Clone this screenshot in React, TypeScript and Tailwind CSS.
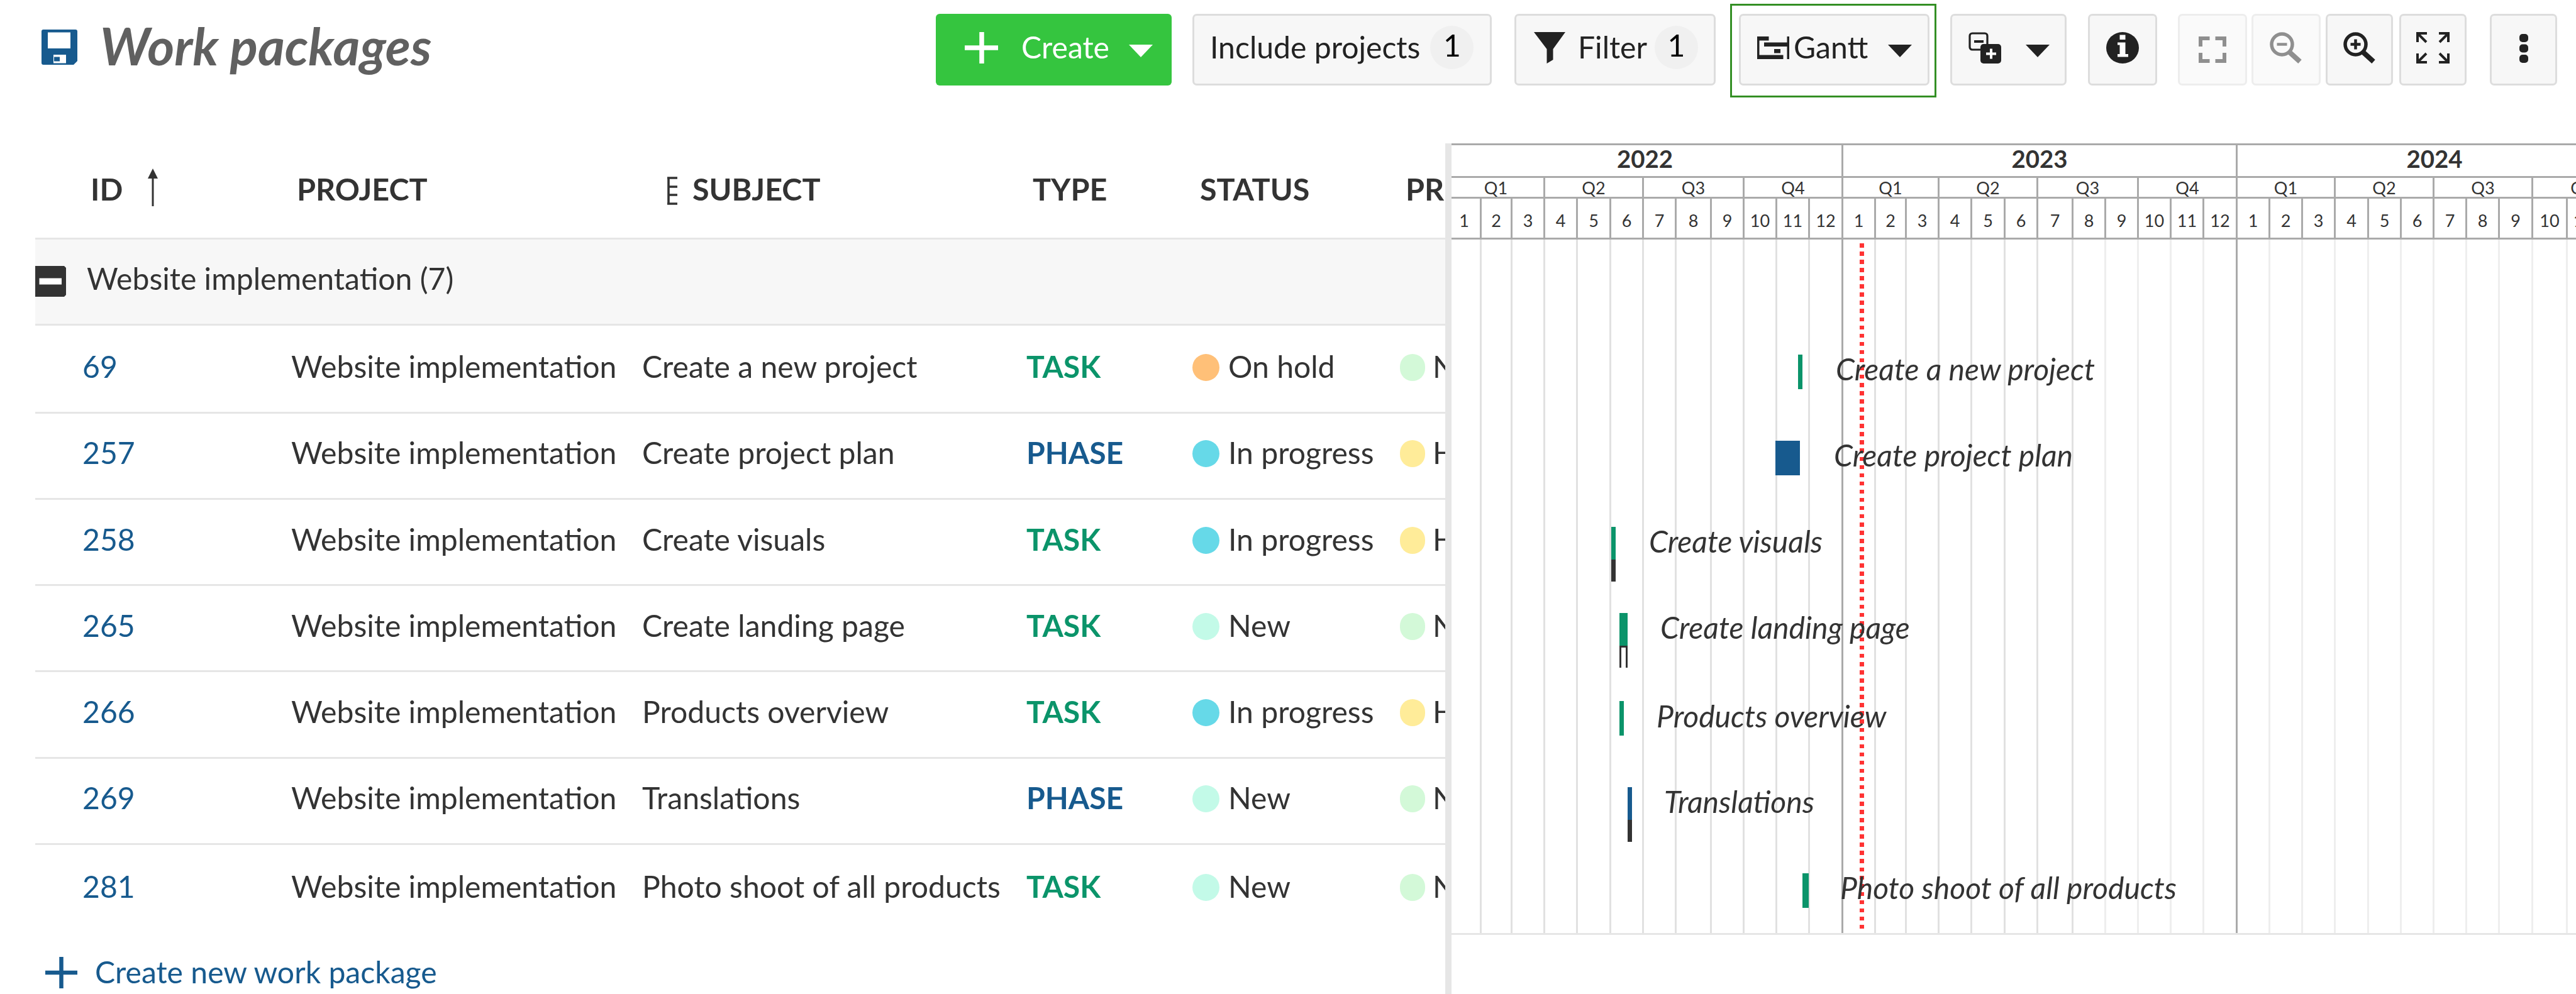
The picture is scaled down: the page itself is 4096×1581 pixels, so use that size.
import type { ReactNode } from "react";

type Row = {
  id: string;
  subject: string;
  type: "TASK" | "PHASE";
  status: "On hold" | "In progress" | "New";
  priority: "Normal" | "High";
  size: string;
};

const rows: Row[] = [
  { id: "69", subject: "Create a new project", type: "TASK", status: "On hold", priority: "Normal", size: "h-[140px] pb-[6px] border-b-[3px]" },
  { id: "257", subject: "Create project plan", type: "PHASE", status: "In progress", priority: "High", size: "h-[137px] pb-[9px] border-b-[3px]" },
  { id: "258", subject: "Create visuals", type: "TASK", status: "In progress", priority: "High", size: "h-[137px] pb-[8px] border-b-[3px]" },
  { id: "265", subject: "Create landing page", type: "TASK", status: "New", priority: "Normal", size: "h-[137px] pb-[7px] border-b-[3px]" },
  { id: "266", subject: "Products overview", type: "TASK", status: "In progress", priority: "High", size: "h-[138px] pb-[8px] border-b-[3px]" },
  { id: "269", subject: "Translations", type: "PHASE", status: "New", priority: "Normal", size: "h-[137px] pb-[9px] border-b-[3px]" },
  { id: "281", subject: "Photo shoot of all products", type: "TASK", status: "New", priority: "Normal", size: "h-[140px] pb-[8px]" },
];

const statusColor = { "On hold": "bg-[#ffc078]", "In progress": "bg-[#66d9e8]", New: "bg-[#c3fae8]" };
const priorityColor = { Normal: "bg-[#d3f9d8]", High: "bg-[#ffec99]" };
const typeColor = { TASK: "text-[#0b946a]", PHASE: "text-[#175a8e]" };

// Left edge of the timeline and the right edge of every month column.
const START = 2308;
const monthEdges = [
  2356, 2405, 2457, 2509, 2562, 2614, 2666, 2722, 2774, 2826, 2878, 2931,
  2983, 3032, 3084, 3136, 3189, 3241, 3297, 3349, 3401, 3453, 3505, 3558,
  3610, 3662, 3714, 3767, 3819, 3871, 3923, 3975, 4028, 4083, 4135, 4187,
];
const spans = (step: number) =>
  monthEdges
    .filter((_, i) => (i + 1) % step === 0)
    .map((edge, i, all) => edge - (i === 0 ? START : all[i - 1]));
const months = spans(1);
const quarters = spans(3);
const years = spans(12);

type Bar = { label: string; labelX: number; labelY: number; x: number; y: number; w: number; color: string; clamp?: "solid" | "open" };

const bars: Bar[] = [
  { label: "Create a new project", labelX: 2919, labelY: 587, x: 2859, y: 564, w: 7, color: "bg-[#0b946a]" },
  { label: "Create project plan", labelX: 2916, labelY: 724, x: 2823, y: 701, w: 39, color: "bg-[#175a8e]" },
  { label: "Create visuals", labelX: 2622, labelY: 861, x: 2562, y: 838, w: 7, color: "bg-[#0b946a]", clamp: "solid" },
  { label: "Create landing page", labelX: 2640, labelY: 998, x: 2575, y: 975, w: 13, color: "bg-[#0b946a]", clamp: "open" },
  { label: "Products overview", labelX: 2634, labelY: 1139, x: 2575, y: 1115, w: 7, color: "bg-[#0b946a]" },
  { label: "Translations", labelX: 2646, labelY: 1275, x: 2588, y: 1252, w: 7, color: "bg-[#175a8e]", clamp: "solid" },
  { label: "Photo shoot of all products", labelX: 2926, labelY: 1412, x: 2866, y: 1389, w: 10, color: "bg-[#0b946a]" },
];

const Icon = ({ w = 52, h = 50, children, className = "" }: { w?: number; h?: number; children: ReactNode; className?: string }) => (
  <svg width={w} height={h} viewBox={`0 0 ${w} ${h}`} className={`block shrink-0 ${className}`} fill="currentColor">
    {children}
  </svg>
);

const Caret = () => (
  <Icon w={38} h={20} className="translate-y-[5px]">
    <path d="M0 0h38L19 20z" />
  </Icon>
);

const Button = ({ children, className = "" }: { children: ReactNode; className?: string }) => (
  <button className={`flex h-[114px] shrink-0 items-center rounded-[7px] border-[3px] border-[#dddddd] bg-[#f7f7f7] pb-[7px] text-[#222222] ${className}`}>
    {children}
  </button>
);

const Badge = () => (
  <span className="flex size-[69px] shrink-0 items-center justify-center rounded-full bg-[#f0f0f0] pb-[7px] text-black">1</span>
);

const Magnifier = ({ plus }: { plus?: boolean }) => (
  <Icon>
    <circle cx="19.5" cy="19.5" r="16.5" fill="none" stroke="currentColor" strokeWidth="5.5" />
    <path d="M31.5 32 48 47" stroke="currentColor" strokeWidth="8" />
    <path d={plus ? "M11.5 19.5h16M19.5 11.5v16" : "M11.5 19.5h16"} stroke="currentColor" strokeWidth="4.5" />
  </Icon>
);

function Toolbar() {
  return (
    <header className="flex h-[228px] shrink-0 items-start pr-[30px]">
      <div className="mt-[47px] ml-[66px] text-[#175a8e]">
        <Icon w={57} h={57}>
          <path fillRule="evenodd" d="M3 0h51a3 3 0 0 1 3 3v47l-6 6H3a3 3 0 0 1-3-3V3a3 3 0 0 1 3-3zM10 4.500v25.500h36V4.500zM19 40v13.500h20V40z" />
          <rect x="20" y="43.500" width="9" height="7" />
        </Icon>
      </div>
      <h1 className="mt-[31px] ml-[36px] text-[82.300px] leading-[83px] font-bold text-[#606060] italic">Work packages</h1>

      <div className="ml-auto flex items-start pt-[22px]">
        <button className="flex h-[114px] w-[375px] shrink-0 items-center rounded-[6px] bg-[#35c53f] pb-[7px] pl-[46px] text-white">
          <Icon w={53} h={50}>
            <path d="M27 0v50M0 25h53" stroke="currentColor" strokeWidth="7.500" />
          </Icon>
          <span className="ml-[37px]">Create</span>
          <span className="ml-[31px]"><Caret /></span>
        </button>

        <Button className="ml-[33px] w-[476px] pl-[25px]">
          <span className="mr-[16px]">Include projects</span>
          <Badge />
        </Button>

        <Button className="ml-[36px] w-[320px] pl-[28px]">
          <Icon w={50}>
            <path d="M0 0h50L30.500 27v17L20.500 50V27z" />
          </Icon>
          <span className="mr-[12px] ml-[20px]">Filter</span>
          <Badge />
        </Button>

        <div className="-mt-[16px] ml-[23px] flex h-[149px] w-[328px] shrink-0 border-[3px] border-[#338f24] pt-[13px] pl-[11px]">
          <Button className="w-[303px] pl-[26px]">
            <Icon w={52} h={36}>
              <path d="M0 0h18.500v6.500h-15V36H0zM47.500 0H51v36h-3.500zM11 9.500h36.500V16H11zM27 20h10v6.500H27zM3 29.500h38.500V36H3z" />
            </Icon>
            <span className="ml-[6px]">Gantt</span>
            <span className="ml-[32px]"><Caret /></span>
          </Button>
        </div>

        <Button className="ml-[22px] w-[185px] pl-[26px]">
          <Icon>
            <rect x="2" y="2" width="28" height="26" rx="4" fill="none" stroke="currentColor" strokeWidth="3.200" />
            <path d="M9 15h15" stroke="currentColor" strokeWidth="4" />
            <rect x="19" y="19" width="33" height="31" rx="5" />
            <path d="M28 34.500h16M36 26.500v16" stroke="#ffffff" strokeWidth="4" />
          </Icon>
          <span className="ml-[39px]"><Caret /></span>
        </Button>

        <Button className="ml-[34px] w-[110px] justify-center">
          <Icon>
            <ellipse cx="26" cy="25" rx="26" ry="25" />
            <path fill="#ffffff" d="M21.500 4.500h9V12h-9zM18 16.500h12.500V35H35v4.500H18V35h3.500V20.500H18z" />
          </Icon>
        </Button>

        <Button className="ml-[33px] w-[110px] justify-center opacity-50">
          <Icon w={44} h={42} className="translate-y-[3px]">
            <path d="M3 16V3h14.500M26.500 3H41v13M41 26v13H26.500M17.500 39H3V26" fill="none" stroke="currentColor" strokeWidth="6" />
          </Icon>
        </Button>
        <Button className="ml-[7px] w-[110px] justify-center opacity-50">
          <Magnifier />
        </Button>
        <Button className="ml-[8px] w-[107px] justify-center">
          <Magnifier plus />
        </Button>
        <Button className="ml-[10px] w-[107px] justify-center">
          <Icon w={53}>
            <path
              d="M2 16V2h15M2 2l14 14M36 2h15v14M51 2 37 16M2 34v14h15M2 48l14-14M51 34v14H36M51 48 37 34"
              fill="none"
              stroke="currentColor"
              strokeWidth="4"
            />
          </Icon>
        </Button>
        <Button className="ml-[37px] w-[107px] justify-center">
          <Icon w={14} h={46} className="translate-y-[1px]">
            <rect width="14" height="13" rx="5" />
            <rect y="16.500" width="14" height="13" rx="5" />
            <rect y="33" width="14" height="13" rx="5" />
          </Icon>
        </Button>
      </div>
    </header>
  );
}

function Table() {
  return (
    <section className="w-[2298px] shrink-0 overflow-hidden pl-[56px] whitespace-nowrap text-[#333333]">
      <div className="flex h-[153px] w-[2400px] items-center border-b-[3px] border-[#e6e6e6] pb-[5px] text-[48.500px] font-bold">
        <div className="flex w-[416px] items-center pl-[88px]">
          ID
          <Icon w={16} h={60} className="ml-[40px] -translate-y-[3px]">
            <path d="M8 0l8 16H0zM6.500 14h3v46h-3z" />
          </Icon>
        </div>
        <div className="w-[589px]">PROJECT</div>
        <div className="flex w-[581px] items-center">
          <Icon w={16} h={45} className="mr-[24px] translate-y-[3px]">
            <path d="M2 2v41M0 2h16M2 16h14M2 29h14M0 43h16" stroke="currentColor" strokeWidth="3.600" />
          </Icon>
          SUBJECT
        </div>
        <div className="w-[266px]">TYPE</div>
        <div className="w-[327px]">STATUS</div>
        <div>PRIORITY</div>
      </div>

      <div className="flex h-[137px] w-[2400px] items-center border-b-[3px] border-[#e6e6e6] bg-[#f7f7f7] pb-[9px]">
        <Icon w={49} h={49} className="translate-y-[4px]">
          <path d="M0 0h46l3 3v43l-3 3H0z" />
          <path d="M6.500 19.500v10H42v-10z" fill="#ffffff" />
        </Icon>
        <span className="ml-[33px]">Website implementation (7)</span>
      </div>

      {rows.map((r) => (
        <div key={r.id} className={`flex w-[2400px] items-center border-[#e6e6e6] ${r.size}`}>
          <div className="w-[407px] pl-[75px] text-[#175a8e]">{r.id}</div>
          <div className="w-[558px]">Website implementation</div>
          <div className="w-[611px]">{r.subject}</div>
          <div className={`w-[264px] font-bold ${typeColor[r.type]}`}>{r.type}</div>
          <div className="flex w-[330px] items-center">
            <span className={`mt-[2px] mr-[14px] size-[43px] rounded-full ${statusColor[r.status]}`} />
            {r.status}
          </div>
          <div className="flex items-center">
            <span className={`mt-[2px] mr-[12px] h-[43px] w-[40px] rounded-full ${priorityColor[r.priority]}`} />
            {r.priority}
          </div>
        </div>
      ))}

      <div className="flex h-[125px] items-center pl-[16px] text-[#175a8e]">
        <Icon w={51} h={50}>
          <path d="M25.500 0v50M0 25h51" stroke="currentColor" strokeWidth="6.500" />
        </Icon>
        <span className="ml-[28px]">Create new work package</span>
      </div>
    </section>
  );
}

function Timeline() {
  return (
    <section className="flex w-[1788px] shrink-0 flex-col overflow-hidden text-[#333333]">
      <div className="flex h-[55px] border-t-[3px] border-b-[3px] border-[#aaaaaa] text-[38.400px] font-bold">
        {years.map((w, i) => (
          <div key={i} className={`flex shrink-0 items-center justify-center border-r-[3px] border-[#aaaaaa] pb-[6px] ${i === 0 ? "pr-[5px]" : ""}`} style={{ width: w }}>
            {2022 + i}
          </div>
        ))}
      </div>
      <div className="flex h-[33px] border-b-[3px] border-[#aaaaaa] text-[27px]">
        {quarters.map((w, i) => (
          <div key={i} className={`flex shrink-0 items-center justify-center border-r-[3px] border-[#aaaaaa] pt-[1px] ${i === 0 ? "pr-[5px]" : ""}`} style={{ width: w }}>
            Q{(i % 4) + 1}
          </div>
        ))}
      </div>
      <div className="flex h-[65px] border-b-[3px] border-[#aaaaaa] text-[27px]">
        {months.map((w, i) => (
          <div key={i} className={`flex shrink-0 items-center justify-center border-r-[3px] border-[#aaaaaa] pt-[7px] ${i === 0 ? "pr-[5px]" : ""}`} style={{ width: w }}>
            {(i % 12) + 1}
          </div>
        ))}
      </div>

      <div className="relative flex h-[1106px] shrink-0 border-b-[3px] border-[#e6e6e6]">
        {months.map((w, i) => (
          <div
            key={i}
            className={`shrink-0 border-r-[3px] ${i % 12 === 11 ? "border-[#aaaaaa]" : i < 19 ? "border-[#e1e1e1]" : "border-[#eeeeee]"}`}
            style={{ width: w }}
          />
        ))}

        {/* Today marker */}
        <div className="absolute top-[6px] left-[649px] h-[1091px] w-[7px] bg-[repeating-linear-gradient(to_bottom,#ff3333_0px,#ff3333_6.5px,transparent_6.5px,transparent_13.06px)]" />

        {bars.map((b) => (
          <div key={b.label}>
            <div className="absolute flex flex-col" style={{ left: b.x - START, top: b.y - 381, width: b.w }}>
              <div className={`shrink-0 ${b.clamp ? "h-[52px]" : "h-[55px]"} ${b.color}`} />
              {b.clamp === "solid" && <div className="h-[35px] bg-[#333333]" />}
              {b.clamp === "open" && <div className="h-[35px] border-x-[3px] border-t-[3px] border-[#333333] bg-white" />}
            </div>
            <div className="absolute -translate-y-1/2 whitespace-nowrap italic" style={{ left: b.labelX - START, top: b.labelY - 381 }}>
              {b.label}
            </div>
          </div>
        ))}
      </div>
    </section>
  );
}

export default function App() {
  return (
    <div className="flex h-[1581px] w-[4096px] flex-col overflow-hidden bg-white text-[48.100px] leading-none font-['Lato',sans-serif]">
      <Toolbar />
      <main className="flex min-h-0 flex-1">
        <Table />
        <div className="w-[10px] shrink-0 bg-[#e6e6e6]" />
        <Timeline />
      </main>
    </div>
  );
}
